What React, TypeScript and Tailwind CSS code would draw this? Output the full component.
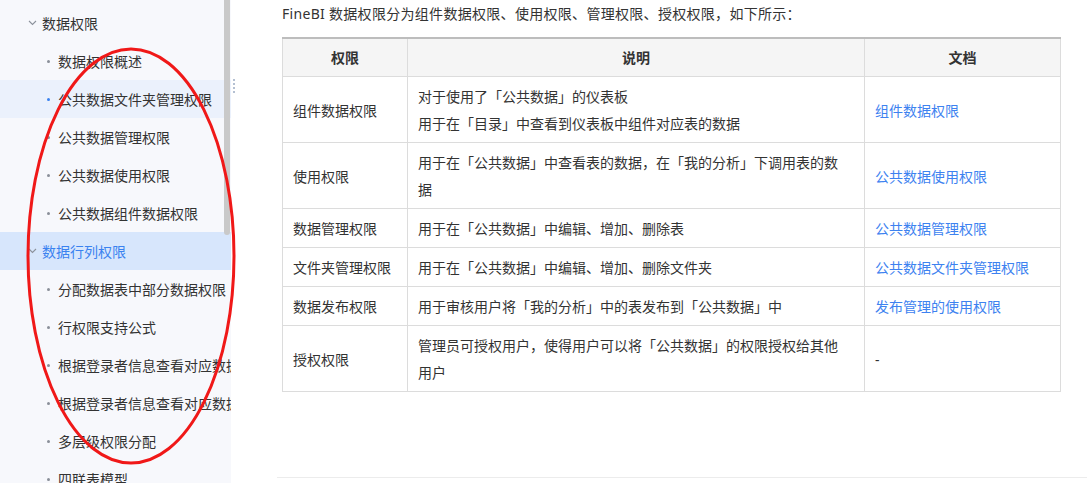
import React from "react";

const font = {
  fontFamily: '"Noto Sans", "Noto Sans CJK SC", sans-serif',
};

type Item = { label: string; kind: "group" | "item"; active?: boolean; selected?: boolean };

const nav: Item[] = [
  { label: "数据权限", kind: "group" },
  { label: "数据权限概述", kind: "item" },
  { label: "公共数据文件夹管理权限", kind: "item", selected: true },
  { label: "公共数据管理权限", kind: "item" },
  { label: "公共数据使用权限", kind: "item" },
  { label: "公共数据组件数据权限", kind: "item" },
  { label: "数据行列权限", kind: "group", active: true },
  { label: "分配数据表中部分数据权限", kind: "item" },
  { label: "行权限支持公式", kind: "item" },
  { label: "根据登录者信息查看对应数据权限", kind: "item" },
  { label: "根据登录者信息查看对应数据权限（二）", kind: "item" },
  { label: "多层级权限分配", kind: "item" },
  { label: "四联表模型", kind: "item" },
];

function Chevron() {
  return (
    <svg width="9" height="6" viewBox="0 0 9 6" className="shrink-0">
      <path d="M1 1 L4.5 4.5 L8 1" fill="none" stroke="#8c929c" strokeWidth="1.1" />
    </svg>
  );
}

const rows: { name: string; desc: string[]; doc: string; link: boolean }[] = [
  {
    name: "组件数据权限",
    desc: ["对于使用了「公共数据」的仪表板", "用于在「目录」中查看到仪表板中组件对应表的数据"],
    doc: "组件数据权限",
    link: true,
  },
  {
    name: "使用权限",
    desc: ["用于在「公共数据」中查看表的数据，在「我的分析」下调用表的数据"],
    doc: "公共数据使用权限",
    link: true,
  },
  {
    name: "数据管理权限",
    desc: ["用于在「公共数据」中编辑、增加、删除表"],
    doc: "公共数据管理权限",
    link: true,
  },
  {
    name: "文件夹管理权限",
    desc: ["用于在「公共数据」中编辑、增加、删除文件夹"],
    doc: "公共数据文件夹管理权限",
    link: true,
  },
  {
    name: "数据发布权限",
    desc: ["用于审核用户将「我的分析」中的表发布到「公共数据」中"],
    doc: "发布管理的使用权限",
    link: true,
  },
  {
    name: "授权权限",
    desc: ["管理员可授权用户，使得用户可以将「公共数据」的权限授权给其他用户"],
    doc: "-",
    link: false,
  },
];

export default function App() {
  return (
    <div
      className="relative flex h-[483px] w-[1087px] overflow-hidden bg-white text-[14px] text-[#333]"
      style={font}
    >
      {/* Sidebar */}
      <aside className="relative w-[231px] shrink-0 overflow-hidden bg-[#f7f8fc] pt-[4px]">
        {nav.map((it, i) =>
          it.kind === "group" ? (
            <div
              key={i}
              className={`flex h-[38px] items-center gap-[5px] whitespace-nowrap pl-[28px] ${
                it.active ? "bg-[#d7e6fc] text-[#3a82f0]" : ""
              }`}
            >
              <Chevron />
              <span>{it.label}</span>
            </div>
          ) : (
            <div
              key={i}
              className={`flex h-[38px] items-center whitespace-nowrap pl-[47px] ${
                it.selected ? "bg-[#ebf1fc]" : ""
              }`}
            >
              <span
                className={`mr-[8px] h-[3px] w-[3px] shrink-0 rounded-full ${
                  it.selected ? "bg-[#3a82f0]" : "bg-[#8a8f99]"
                }`}
              />
              <span>{it.label}</span>
            </div>
          )
        )}
        <div className="absolute right-[1px] top-0 h-[235px] w-[6px] rounded-b-[3px] bg-[#c9c9c9]" />
      </aside>

      {/* Drag handle */}
      <div className="flex w-[6px] shrink-0 flex-col items-center gap-[2px] pt-[79px]">
        <span className="h-[2px] w-[2px] bg-[#b4c0d2]" />
        <span className="h-[2px] w-[2px] bg-[#b4c0d2]" />
        <span className="h-[2px] w-[2px] bg-[#b4c0d2]" />
        <span className="h-[2px] w-[2px] bg-[#b4c0d2]" />
      </div>

      {/* Main */}
      <main className="flex flex-1 flex-col pl-[45px] pr-[27px] pt-[4px]">
        <p className="leading-[20px] tracking-[0.3px]">
          FineBI 数据权限分为组件数据权限、使用权限、管理权限、授权权限，如下所示：
        </p>
        <table className="mt-[13px] w-[778px] table-fixed border-collapse">
          <colgroup>
            <col className="w-[125px]" />
            <col className="w-[457px]" />
            <col className="w-[196px]" />
          </colgroup>
          <thead>
            <tr className="bg-[#f5f5f5]">
              {["权限", "说明", "文档"].map((h) => (
                <th
                  key={h}
                  className="border border-t-2 border-[#dcdcdc] border-t-[#bdbdbd] py-[5px] text-center font-bold leading-[27px]"
                >
                  {h}
                </th>
              ))}
            </tr>
          </thead>
          <tbody>
            {rows.map((r) => (
              <tr key={r.name}>
                <td className="border border-[#dcdcdc] px-[10px] pb-[5px] pt-[6px] align-middle leading-[27px]">
                  {r.name}
                </td>
                <td className="border border-[#dcdcdc] pl-[10px] pr-[20px] pb-[5px] pt-[6px] align-middle leading-[27px]">
                  {r.desc.map((d, i) => (
                    <div key={i}>{d}</div>
                  ))}
                </td>
                <td
                  className={`border border-[#dcdcdc] px-[10px] pb-[5px] pt-[6px] align-middle leading-[27px] ${
                    r.link ? "text-[#3d82f0]" : ""
                  }`}
                >
                  {r.doc}
                </td>
              </tr>
            ))}
          </tbody>
        </table>
        <div className="mt-auto mb-[5px] -ml-[5px] -mr-[27px] border-t border-[#ececec]" />
      </main>

      {/* Red annotation ellipse */}
      <svg
        className="pointer-events-none absolute left-0 top-0"
        width="1087"
        height="483"
        viewBox="0 0 1087 483"
      >
        <ellipse cx="131" cy="256" rx="103" ry="207" fill="none" stroke="#f01818" strokeWidth="3" />
      </svg>
    </div>
  );
}
